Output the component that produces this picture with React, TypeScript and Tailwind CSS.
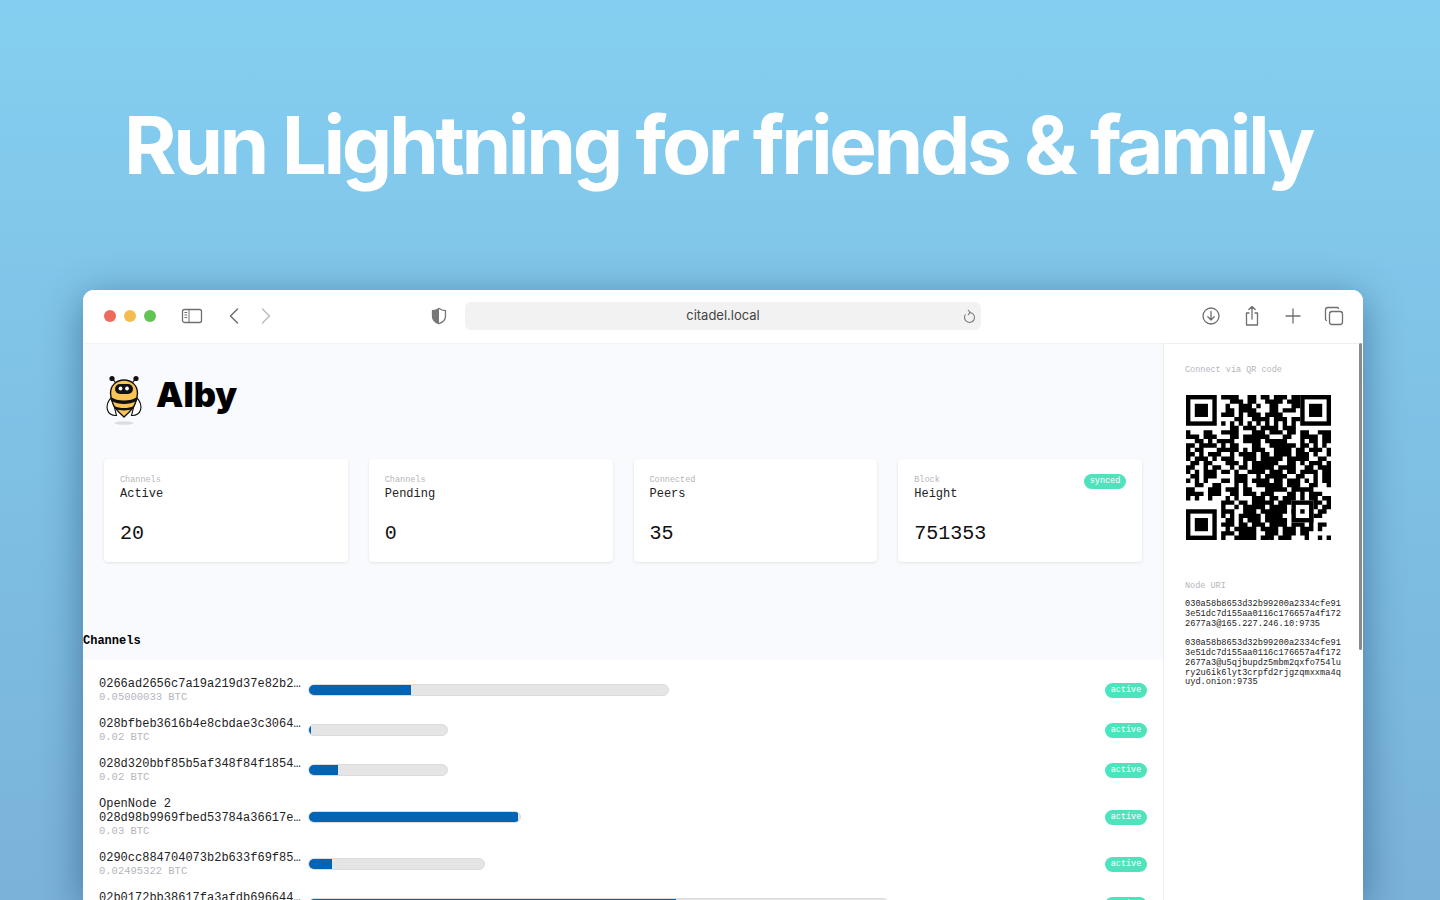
import React from "react";

const channels = [
  { id: "r1", alias: "", pubkey: "0266ad2656c7a19a219d37e82b280d5d1a2e1e2a5c5a6f7f6d8e6fd", btc: "0.05000033 BTC", track: 361, fill: 103 },
  { id: "r2", alias: "", pubkey: "028bfbeb3616b4e8cbdae3c30648a1f0e2c9a1b4d7f3a2e61c90ab", btc: "0.02 BTC", track: 140, fill: 3 },
  { id: "r3", alias: "", pubkey: "028d320bbf85b5af348f84f18542c0e1b7d4a9f36e21c7d80ab4fe", btc: "0.02 BTC", track: 140, fill: 30 },
  { id: "r4", alias: "OpenNode 2", pubkey: "028d98b9969fbed53784a36617eb489a59ab6dc9b9d77fcdca9ff5", btc: "0.03 BTC", track: 213, fill: 210 },
  { id: "r5", alias: "", pubkey: "0290cc884704073b2b633f69f85a3c1e4d7b9026fe1ac35d8e47b6", btc: "0.02495322 BTC", track: 177, fill: 24 },
  { id: "r6", alias: "", pubkey: "02b0172bb38617fa3afdb6966440d1c7e93b5a28f4c6e017d9ab3c", btc: "0.1 BTC", track: 581, fill: 368 },
];

const stats = [
  { label: "Channels", title: "Active", value: "20" },
  { label: "Channels", title: "Pending", value: "0" },
  { label: "Connected", title: "Peers", value: "35" },
  { label: "Block", title: "Height", value: "751353", synced: true },
];

const qrRows = [
  "........####..##.##.###.##.......",
  "..........###.##..####.###.......",
  ".........#..###.#..##...##.......",
  ".........##.####...##.###........",
  "........###.#.###.####...........",
  "...........##..####.###.##.......",
  "........#.#.#.#.#.#.#.#.#........",
  "..........##.###.####.###........",
  "#...##..####...###.###.##.##..###",
  "###.###...##.######...##..####.##",
  "..##.#.####..####.#####...#.##.##",
  "##.####.#.##...##..######.##.#.#.",
  "#.##...#####.#.###..####.##.###.#",
  "##.#.###..#.####.##.####.###.#..#",
  "#.###.#.###..###.#####.#####..##.",
  ".##.##...###.#.######..##.#.###.#",
  "##..#.##..#.##.#####.####..##.###",
  "#.#.###.##.#..####.###.##.####.##",
  ".##.###....###..#.#####..##..#.##",
  "#.#.#...##.###.####.##.###.#.#.##",
  "..##..##...#.#..######.###..##..#",
  "##...###.###.##...#####.#####....",
  "####.###..##.###.###...##.#.###..",
  "#.#..#...#.#...###.##.###.#.##.##",
  "........###.##.#####.###.....##.#",
  "........#..#.#####.####......#.##",
  "........###..###.######.#.#.#.##.",
  "........#.#.#####.####.......##..",
  ".........##.#.###.#####.....#....",
  "........###.##.###.####.###.#.##.",
  ".........#.#####.####.###.###.#..",
  "........###.####..###.###.##.....",
  "........#..#####.###.###...#..#.#",
];

const qrModules = qrRows
  .flatMap((row, y) =>
    row
      .slice(0, 33)
      .split("")
      .map((c, x) => (c === "#" ? `M${x} ${y}h1v1h-1z` : "")),
  )
  .join("");

// finder squares sit at three corners, alignment square near the fourth
const Finder = ({ x, y }: { x: number; y: number }) => (
  <>
    <rect x={x + 0.5} y={y + 0.5} width="6" height="6" fill="none" stroke="#000" strokeWidth="1" />
    <rect x={x + 2} y={y + 2} width="3" height="3" fill="#000" />
  </>
);

const QrCode = () => (
  <svg viewBox="0 0 33 33" className="block h-[145px] w-[145px]">
    <path d={qrModules} fill="#000" />
    <Finder x={0} y={0} />
    <Finder x={26} y={0} />
    <Finder x={0} y={26} />
    <rect x="24.500" y="24.500" width="4" height="4" fill="#fff" stroke="#000" strokeWidth="1" />
    <rect x="26" y="26" width="1" height="1" fill="#000" />
  </svg>
);

const BeeLogo = () => (
  <svg viewBox="0 0 40 52" className="h-[52px] w-[40px] shrink-0">
    <ellipse cx="20" cy="49" rx="9.500" ry="1.800" fill="#dcdde0" />
    <path d="M7 24c-3 3-4.500 8-3.500 12 .8 3 4 6 9 5.500l-2-8z" fill="#fff" stroke="#111" strokeWidth="1.100" />
    <path d="M33 24c3 3 4.500 8 3.500 12-.8 3-4 6-9 5.500l2-8z" fill="#fff" stroke="#111" strokeWidth="1.100" />
    <path d="M9 5l4 6M31 5l-4 6" stroke="#111" strokeWidth="1.200" />
    <circle cx="8" cy="4.500" r="2.600" fill="#111" />
    <circle cx="32" cy="4.500" r="2.600" fill="#111" />
    <path d="M20 6c8 0 13.500 6 13.500 13 0 4-1 8-3 12-2 4-6 8-10.500 12-4.500-4-8.500-8-10.500-12-2-4-3-8-3-12C6.500 12 12 6 20 6z" fill="#f8c455" stroke="#111" strokeWidth="1.400" />
    <path d="M7 23c3 2.500 8 3.500 13 3.500s10-1 13-3.500l-.7 4c-3 2-8 3-12.300 3s-9.300-1-12.300-3z" fill="#111" />
    <path d="M10 32c3 1.500 6.500 2 10 2s7-.5 10-2l-1.500 3c-2.500 1-5.500 1.400-8.500 1.400s-6-.4-8.500-1.400z" fill="#111" />
    <rect x="11" y="10" width="18" height="10" rx="5" fill="#111" />
    <circle cx="16.500" cy="14.500" r="1.900" fill="#fff" />
    <circle cx="23" cy="14.500" r="1.900" fill="#fff" />
  </svg>
);

const Badge = ({ children }: { children: React.ReactNode }) => (
  <span className="flex h-[15px] w-[42px] items-center justify-center rounded-full bg-[#4fe3bd] text-[8.5px] leading-none text-white">
    {children}
  </span>
);

const ToolbarIcon = ({ children, className = "" }: { children: React.ReactNode; className?: string }) => (
  <svg
    viewBox="0 0 24 24"
    fill="none"
    stroke="#6f6f6f"
    strokeWidth="1.300"
    strokeLinecap="round"
    strokeLinejoin="round"
    className={`h-6 w-6 shrink-0 ${className}`}
  >
    {children}
  </svg>
);

const Toolbar = () => (
  <div className="flex h-[53px] shrink-0 items-center bg-white pb-px font-['Inter',sans-serif]">
    <div className="ml-[21px] flex w-[56px] gap-2">
      <span className="h-3 w-3 rounded-full bg-[#ee6a5f]" />
      <span className="h-3 w-3 rounded-full bg-[#f5bd4f]" />
      <span className="h-3 w-3 rounded-full bg-[#61c454]" />
    </div>
    <ToolbarIcon className="ml-[20px]">
      <rect x="2.500" y="5.500" width="19" height="13" rx="2" />
      <path d="M9 5.500v13M4.800 8.500h2M4.800 11h2M4.800 13.500h2" strokeWidth="1" />
    </ToolbarIcon>
    <ToolbarIcon className="ml-[18px]">
      <path d="M15.500 5l-7 7 7 7" strokeWidth="1.500" />
    </ToolbarIcon>
    <svg viewBox="0 0 24 24" fill="none" stroke="#bdbdbd" strokeWidth="1.500" strokeLinecap="round" strokeLinejoin="round" className="ml-[8px] h-6 w-6 shrink-0">
      <path d="M8.500 5l7 7-7 7" />
    </svg>
    <svg viewBox="0 0 24 24" className="ml-[149px] h-6 w-6 shrink-0">
      <path d="M12 4.500c2 1.300 4.200 2 6.500 2.200v5.500c0 3.500-2.500 6-6.500 7.500-4-1.500-6.500-4-6.500-7.500V6.700C7.800 6.500 10 5.800 12 4.500z" fill="#fff" stroke="#777" strokeWidth="1.300" />
      <path d="M12 4.500c-2 1.300-4.200 2-6.500 2.200v5.500c0 3.500 2.500 6 6.500 7.500z" fill="#777" />
    </svg>
    <div className="relative ml-[14px] flex h-7 w-[516px] items-center justify-center rounded-md bg-[#f2f2f2] text-[13px] text-[#444]">
      citadel.local
      <svg viewBox="0 0 24 24" fill="none" stroke="#777" strokeWidth="1.700" strokeLinecap="round" strokeLinejoin="round" className="absolute right-[4px] top-[7px] h-[15px] w-[15px]">
        <path d="M12 5.500a8 8 0 1 1-6.800 3.800M10 2l3 3.500-3 3.500" />
      </svg>
    </div>
    <div className="ml-auto mr-[17px] flex gap-[17px]">
      <ToolbarIcon>
        <circle cx="12" cy="12" r="8" />
        <path d="M12 7.500v8.500M8.800 12.800l3.200 3.200 3.200-3.200" />
      </ToolbarIcon>
      <ToolbarIcon>
        <path d="M9 9H6.500v12h11V9H15M12 15V2.500M8.800 5.500L12 2.500l3.200 3" />
      </ToolbarIcon>
      <ToolbarIcon>
        <path d="M12 5v14M5 12h14" />
      </ToolbarIcon>
      <ToolbarIcon>
        <rect x="7.500" y="7.500" width="13" height="13" rx="2.500" />
        <path d="M4.500 16.500a1.500 1.500 0 0 1-1-1.500V6a2.500 2.500 0 0 1 2.500-2.500h9a1.500 1.500 0 0 1 1.500 1" />
      </ToolbarIcon>
    </div>
  </div>
);

const StatCard = ({ stat }: { stat: (typeof stats)[number] }) => (
  <div className="relative h-[103px] rounded-[4px] bg-white p-4 shadow-[0_1px_3px_rgba(0,0,0,0.1)]">
    <div className="text-[8.5px] leading-[10px] text-[#b4b6bd]">{stat.label}</div>
    <div className="mt-px text-[12px] leading-[16px] text-[#222]">{stat.title}</div>
    <div className="mt-[19px] text-[20px] leading-[26px] text-[#111]">{stat.value}</div>
    {stat.synced && (
      <span className="absolute right-4 top-[15px]">
        <Badge>synced</Badge>
      </span>
    )}
  </div>
);

const ChannelRow = ({ channel }: { channel: (typeof channels)[number] }) => (
  <div className="flex items-center gap-[7px]">
    <div className="w-[202px] shrink-0 pt-px text-[12px] leading-[14px] text-[#222]">
      {channel.alias && <div>{channel.alias}</div>}
      <div className="truncate">{channel.pubkey}</div>
      <div className="text-[10.500px] leading-[13px] text-[#b4b6bd]">{channel.btc}</div>
    </div>
    <div
      className="h-3 overflow-hidden rounded-full border border-[#dcdcdc] bg-[#e5e5e5]"
      style={{ width: channel.track }}
    >
      <div className="-m-px h-3 bg-[#0264b4]" style={{ width: channel.fill }} />
    </div>
    <span className="ml-auto pt-[1px]">
      <Badge>active</Badge>
    </span>
  </div>
);

export default function App() {
  return (
    <div className="flex h-screen w-full flex-col overflow-hidden bg-gradient-to-b from-[#84cff1] to-[#7ab2da]">
      <div className="flex h-[290px] shrink-0 justify-center pr-[4px] pt-[96px]">
        <h1 className="font-['Inter',sans-serif] text-[80px] font-bold leading-[97px] tracking-[-0.042em] text-white">
          Run Lightning for friends &amp; family
        </h1>
      </div>
      <div className="relative ml-[83px] flex min-h-0 w-[1280px] flex-1 flex-col overflow-hidden rounded-t-[11px] bg-white shadow-[0_8px_40px_rgba(0,40,80,0.45)]">
        <Toolbar />
        <div className="flex min-h-0 flex-1 font-['Liberation_Mono',monospace]">
          <main className="w-[1080px] shrink-0 overflow-hidden border-t border-[#f3f4f7] bg-[#f9fafe]">
            <div className="flex h-[115px] items-start gap-[12px] pl-[21px] pt-[30px]">
              <BeeLogo />
              <span className="font-['Inter',sans-serif] text-[34.5px] font-black leading-[42px] text-black">
                Alby
              </span>
            </div>
            <div className="grid grid-cols-4 gap-[21px] pl-[21px] pr-[21px]">
              {stats.map((stat) => (
                <StatCard key={stat.label + stat.title} stat={stat} />
              ))}
            </div>
            <h2 className="mt-[72px] text-[12px] font-bold leading-[14px] text-black">Channels</h2>
            <div className="mt-[12px] flex flex-col gap-3 rounded-tl-[4px] bg-white px-4 pb-4 pt-[16px]">
              {channels.map((channel) => (
                <ChannelRow key={channel.id} channel={channel} />
              ))}
            </div>
          </main>
          <aside className="w-[200px] border-l border-t border-[#eeeff2] bg-white pl-[21px] pr-[21px] pt-[21px]">
            <div className="text-[8.5px] leading-[10px] text-[#b4b6bd]">Connect via QR code</div>
            <div className="ml-px mt-[20px]">
              <QrCode />
            </div>
            <div className="mt-[41px] text-[8.5px] leading-[10px] text-[#b4b6bd]">Node URI</div>
            <p className="mt-[9px] break-all text-[8.67px] leading-[9.75px] text-[#222]">
              030a58b8653d32b99200a2334cfe913e51dc7d155aa0116c176657a4f1722677a3@165.227.246.10:9735
            </p>
            <p className="mt-[10px] break-all text-[8.67px] leading-[9.75px] text-[#222]">
              030a58b8653d32b99200a2334cfe913e51dc7d155aa0116c176657a4f1722677a3@u5qjbupdz5mbm2qxfo754lury2u6ik6lyt3crpfd2rjgzqmxxma4quyd.onion:9735
            </p>
          </aside>
        </div>
        <div className="absolute right-[1px] top-[53px] h-[307px] w-[3px] rounded-full bg-[#8a8a8a]" />
      </div>
    </div>
  );
}
